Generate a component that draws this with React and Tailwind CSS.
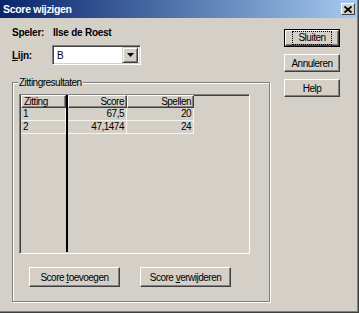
const font = "font-['Liberation_Sans',Arial,sans-serif]";

function Btn({ children, isDefault, className = "" }) {
  return (
    <div className={`${isDefault ? "border border-black" : ""} ${className}`}>
      <div className="h-full w-full border-t border-l border-t-white border-l-white border-r border-b border-r-[#404040] border-b-[#404040] shadow-[inset_-1px_-1px_0_#808080] flex items-center justify-center">
        {isDefault ? (
          <div className="px-[5px] leading-[12px] outline outline-1 outline-dotted outline-black">
            {children}
          </div>
        ) : (
          children
        )}
      </div>
    </div>
  );
}

function HeaderCell({ children, className = "" }) {
  return (
    <div
      className={`h-[13px] leading-[11px] px-[2px] border-t border-l border-t-white border-l-white border-r border-b border-r-[#404040] border-b-[#404040] shadow-[inset_-1px_-1px_0_#808080] ${className}`}
    >
      {children}
    </div>
  );
}

function Cell({ children, className = "" }) {
  return (
    <div
      className={`h-[13px] leading-[12px] px-[2px] border-r border-b border-r-[#f4f3ee] border-b-[#f4f3ee] ${className}`}
    >
      {children}
    </div>
  );
}

const rows = [
  { zitting: "1", score: "67,5", spellen: "20" },
  { zitting: "2", score: "47,1474", spellen: "24" },
];

export default function App() {
  return (
    <div className={`w-[359px] h-[313px] bg-[#d4d0c8] text-black text-[10px] tracking-[-0.5px] ${font} border-r border-b border-[#404040] overflow-hidden`}>
      <div className="h-full w-full flex flex-col border-r border-b border-[#808080]">
        {/* title bar */}
        <div className="h-[18px] shrink-0 flex items-center justify-between pl-[3px] pr-[2px] bg-gradient-to-r from-[#0a246a] to-[#a6caf0]">
          <span className="text-white font-bold text-[10.5px] tracking-[-0.3px] leading-[13px]">Score wijzigen</span>
          <div className="w-[14px] h-[12px] bg-[#d4d0c8] border-t border-l border-t-white border-l-white border-r border-b border-r-[#404040] border-b-[#404040] flex items-center justify-center">
            <svg width="8" height="7" viewBox="0 0 8 7">
              <path d="M0.5 0.5 L7.5 6.5 M7.5 0.5 L0.5 6.5" stroke="black" strokeWidth="1.8" />
            </svg>
          </div>
        </div>

        {/* body */}
        <div className="flex flex-1 pl-[12px] pt-[8px]">
          <div className="w-[258px] flex flex-col">
            <div className="flex font-bold tracking-[-0.25px] leading-[13px] h-[13px]">
              <span className="w-[41px]">Speler:</span>
              <span>Ilse de Roest</span>
            </div>
            <div className="flex items-center mt-[6px]">
              <span className="w-[40px] font-bold tracking-[-0.25px]">
                <span className="underline">L</span>ijn:
              </span>
              <div className="w-[89px] h-[20px] bg-white border-t border-l border-t-[#808080] border-l-[#808080] border-r border-b border-r-white border-b-white shadow-[inset_1px_1px_0_#404040,inset_-1px_-1px_0_#d4d0c8] flex items-center p-[2px]">
                <span className="flex-1 pl-[2px] leading-[13px]">B</span>
                <div className="w-[16px] h-[16px] bg-[#d4d0c8] border-t border-l border-t-[#d4d0c8] border-l-[#d4d0c8] border-r border-b border-r-[#404040] border-b-[#404040] shadow-[inset_1px_1px_0_#fff,inset_-1px_-1px_0_#808080] flex items-center justify-center">
                  <svg width="7" height="4" viewBox="0 0 7 4">
                    <path d="M0 0 H7 L3.5 4 Z" fill="black" />
                  </svg>
                </div>
              </div>
            </div>

            {/* group box */}
            <div className="relative mt-[17px] h-[220px] border border-[#808080] shadow-[1px_1px_0_#fff,inset_1px_1px_0_#fff] pt-[11px] pl-[6px] flex flex-col">
              <span className="absolute -top-[7px] left-[5px] px-[1px] bg-[#d4d0c8] leading-[13px]">
                Zittingresultaten
              </span>
              <div className="w-[231px] h-[160px] border-t border-l border-t-[#808080] border-l-[#808080] border-r border-b border-r-white border-b-white shadow-[inset_1px_1px_0_#404040,inset_-1px_-1px_0_#d4d0c8] px-[1px] pt-[0px] pb-[1px] flex">
                <div className="w-[45px] flex flex-col">
                  <HeaderCell>Zitting</HeaderCell>
                  {rows.map((r) => (
                    <Cell key={r.zitting}>{r.zitting}</Cell>
                  ))}
                </div>
                <div className="w-[2px] bg-black" />
                <div className="w-[59px] flex flex-col">
                  <HeaderCell className="text-right">Score</HeaderCell>
                  {rows.map((r) => (
                    <Cell key={r.zitting} className="text-right">{r.score}</Cell>
                  ))}
                </div>
                <div className="w-[67px] flex flex-col">
                  <HeaderCell className="text-right">Spellen</HeaderCell>
                  {rows.map((r) => (
                    <Cell key={r.zitting} className="text-right">{r.spellen}</Cell>
                  ))}
                </div>
              </div>
              <div className="flex gap-[20px] mt-[13px] pl-[10px]">
                <Btn className="w-[91px] h-[20px]">
                  <span>
                    Score <span className="underline">t</span>oevoegen
                  </span>
                </Btn>
                <Btn className="w-[91px] h-[20px]">
                  <span>
                    Score <span className="underline">v</span>erwijderen
                  </span>
                </Btn>
              </div>
            </div>
          </div>

          {/* right buttons */}
          <div className="ml-[14px] mt-[3px] flex flex-col gap-[7px]">
            <Btn isDefault className="w-[56px] h-[18px]">Sluiten</Btn>
            <Btn className="w-[56px] h-[18px]">Annuleren</Btn>
            <Btn className="w-[56px] h-[18px]">Help</Btn>
          </div>
        </div>
      </div>
    </div>
  );
}
